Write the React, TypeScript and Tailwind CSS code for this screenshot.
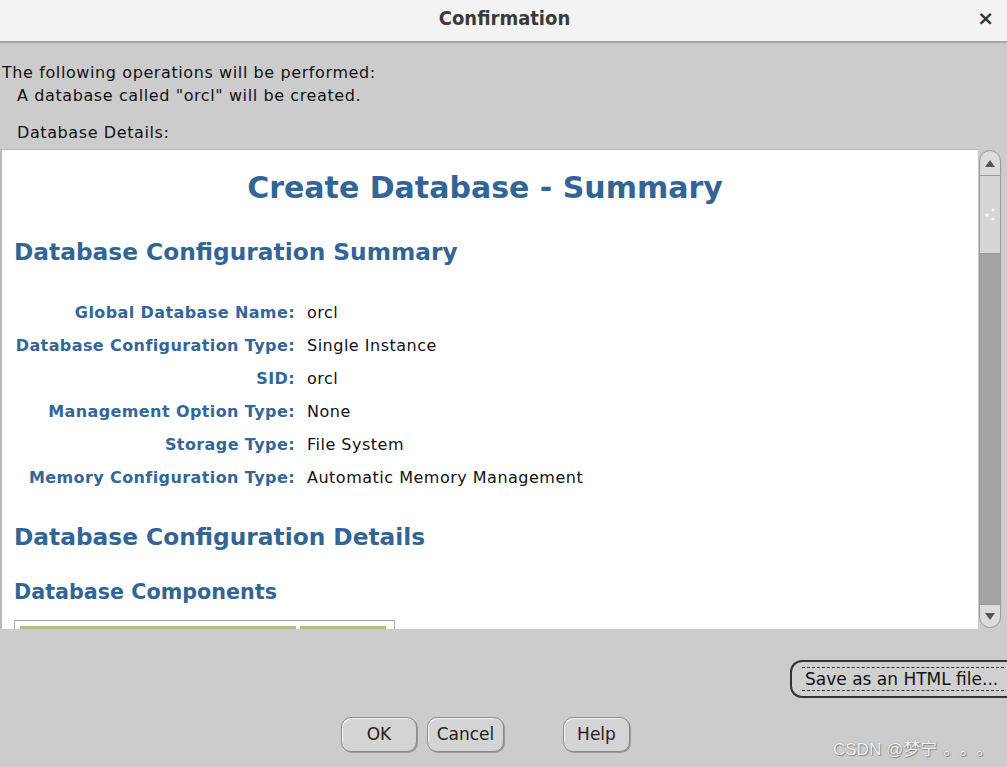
import React from "react";

const rows: [string, string][] = [
  ["Global Database Name:", "orcl"],
  ["Database Configuration Type:", "Single Instance"],
  ["SID:", "orcl"],
  ["Management Option Type:", "None"],
  ["Storage Type:", "File System"],
  ["Memory Configuration Type:", "Automatic Memory Management"],
];

function Btn({ children, w }: { children: React.ReactNode; w: string }) {
  return (
    <div
      className={`${w} h-[35px] flex items-center justify-center rounded-[10px] border border-[#8a8a8a] bg-[#d4d4d4] shadow-[inset_1px_1px_0_#f4f4f4,1px_1px_0_#9a9a9a] text-[17px] text-[#222]`}
    >
      {children}
    </div>
  );
}

export default function App() {
  return (
    <div
      className="w-[1007px] h-[767px] bg-[#cccccc] flex flex-col overflow-hidden relative"
      style={{ fontFamily: '"DejaVu Sans", "Noto Sans CJK SC", sans-serif' }}
    >
      {/* title bar */}
      <div className="h-[43px] bg-[#f3f3f3] flex items-start justify-center relative border-b-[2px] border-[#a6a6a6] shrink-0">
        <span
          className="text-[20px] font-bold text-[#3a3a3a] pl-[2px] mt-[3px]"
          style={{ fontFamily: '"DejaVu Sans Condensed", "DejaVu Sans", sans-serif' }}
        >
          Confirmation
        </span>
        <span className="absolute right-[13px] top-[3px] text-[20px] font-bold text-[#333]">×</span>
      </div>

      {/* body text */}
      <div className="pt-[18px] text-[16px] text-[#111] leading-[23px]" style={{ letterSpacing: "0.6px" }}>
        <div className="pl-[2px]">The following operations will be performed:</div>
        <div className="pl-[17px]">A database called "orcl" will be created.</div>
        <div className="pl-[17px] mt-[14px]">Database Details:</div>
      </div>

      {/* content panel */}
      <div className="mt-[5px] h-[480px] flex shrink-0">
        <div className="flex-1 bg-white border-l-[2px] border-t border-[#b8b8b8] overflow-hidden text-[#336699]">
          <div className="text-center text-[30px] font-bold leading-none pt-[23px] pr-[10px] text-[#326496]">
            Create Database - Summary
          </div>
          <div className="pl-[12px] pt-[37px] text-[23.3px] font-bold leading-none text-[#326496]">
            Database Configuration Summary
          </div>
          <div className="mt-[39px] flex flex-col gap-[11px]">
            {rows.map(([l, v]) => (
              <div key={l} className="flex items-center h-[22px]">
                <div className="w-[293px] text-right text-[16px] font-bold text-[#336699]" style={{ letterSpacing: "0.4px" }}>{l}</div>
                <div className="pl-[12px] text-[16px] text-[#111]" style={{ letterSpacing: "0.5px" }}>{v}</div>
              </div>
            ))}
          </div>
          <div className="pl-[12px] pt-[36px] text-[23.3px] font-bold leading-none text-[#326496]">
            Database Configuration Details
          </div>
          <div className="pl-[12px] pt-[33px] text-[20.7px] font-bold leading-none text-[#326496]">
            Database Components
          </div>
          <div className="ml-[12px] mt-[18px] w-[381px] h-[40px] border border-[#a8a8a8] flex gap-[4px] px-[5px] pt-[5px]">
            <div className="w-[276px] border-t-[3px] border-x border-[#b8b88a] bg-[#f4f4ea]" />
            <div className="w-[86px] border-t-[3px] border-x border-[#b8b88a] bg-[#f4f4ea]" />
          </div>
        </div>

        {/* scrollbar */}
        <div className="w-[29px] bg-[#cccccc] flex flex-col items-start pl-[1px] pt-[1px]">
          <div className="w-[22px] h-[26px] rounded-t-[11px] border border-[#999] bg-[#dcdcdc] flex items-center justify-center">
            <svg width="10" height="7" viewBox="0 0 10 7"><path d="M0 7 L5 0 L10 7 Z" fill="#555" /></svg>
          </div>
          <div className="w-[22px] h-[78px] border border-[#999] border-t-0 bg-[#d6d6d6] flex items-center justify-center relative">
            <svg width="12" height="20" viewBox="0 0 12 20">
              <circle cx="9" cy="5" r="1.5" fill="#fff" />
              <circle cx="3" cy="10" r="1.5" fill="#fff" />
              <circle cx="9" cy="14" r="1.5" fill="#fff" />
            </svg>
          </div>
          <div className="w-[22px] flex-1 bg-[#a4a4a4] border-x border-[#999]" />
          <div className="w-[22px] h-[24px] rounded-b-[11px] border border-[#999] bg-[#dcdcdc] flex items-center justify-center mb-[1px]">
            <svg width="10" height="7" viewBox="0 0 10 7"><path d="M0 0 L5 7 L10 0 Z" fill="#555" /></svg>
          </div>
        </div>
      </div>

      {/* save button */}
      <div className="flex justify-end mt-[31px]">
        <div className="w-[218px] h-[38px] mr-[-1px] rounded-l-[12px] border-2 border-[#333] border-r-0 bg-[#d0d0d0] flex items-center pl-[10px]">
          <span className="text-[17px] text-[#111] border-y border-dashed border-[#333] leading-[22px] pr-[6px] pl-[3px]">
            Save as an HTML file...
          </span>
        </div>
      </div>

      {/* bottom buttons */}
      <div className="flex mt-[19px] pl-[341px]">
        <Btn w="w-[76px]">OK</Btn>
        <div className="w-[10px]" />
        <Btn w="w-[77px]">Cancel</Btn>
        <div className="w-[59px]" />
        <Btn w="w-[67px]">Help</Btn>
      </div>

      {/* watermark */}
      <div
        className="absolute left-[833px] top-[737px] text-[17px] text-[#f4f4f4] whitespace-nowrap"
        style={{ textShadow: "0 0 1px #777, 1px 1px 1px #888", fontFamily: '"Liberation Sans", "Noto Sans CJK SC", sans-serif' }}
      >
        CSDN @梦宁<span className="pl-[6px]" style={{ letterSpacing: "8px" }}>。。。</span>
      </div>
    </div>
  );
}
